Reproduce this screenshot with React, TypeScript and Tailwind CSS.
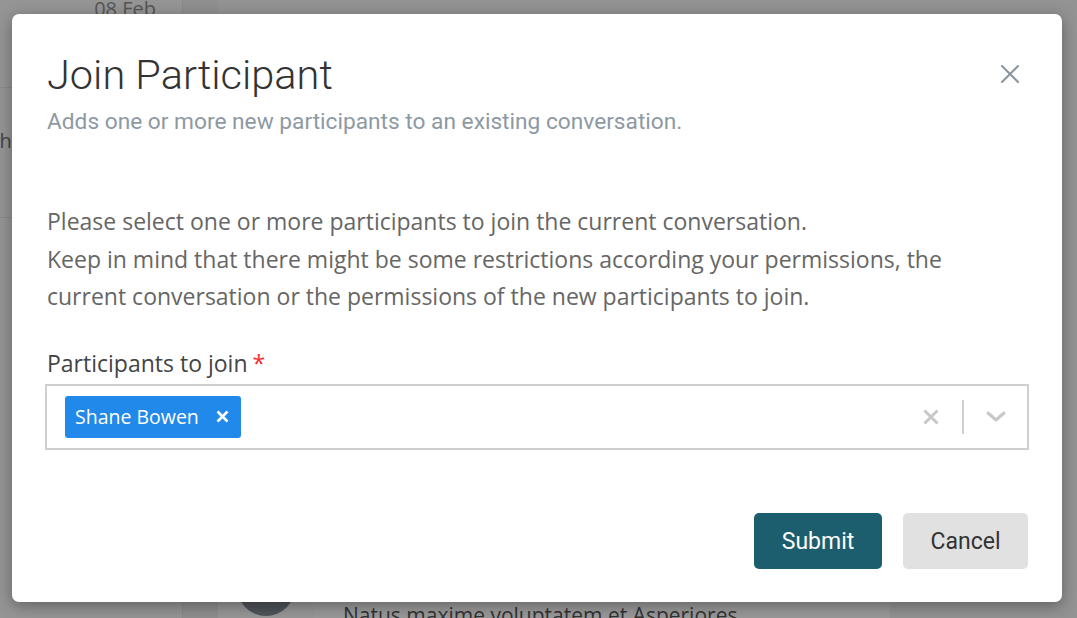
import React from "react";

export default function App() {
  return (
    <div className="relative w-[1077px] h-[618px] overflow-hidden bg-[#939393] font-['Roboto',sans-serif]">
      {/* background app (dimmed) */}
      <div className="flex h-full">
        <div className="w-[183px] h-full bg-[#959595] border-r border-[#8a8a8a] flex flex-col">
          <div className="h-[88px] border-b border-[#8a8a8a] flex justify-end pr-[26px]">
            <span className="text-[20px] text-[#555] leading-none mt-[-1px] font-['Open_Sans',sans-serif]">08 Feb</span>
          </div>
          <div className="h-[130px] border-b border-[#8a8a8a] flex items-start pt-[38px]">
            <span className="text-[20px] text-[#444] ml-[-10px] font-['Open_Sans',sans-serif]">ch</span>
          </div>
        </div>
        <div className="w-[35px] h-full bg-[#8f8f8f]" />
        <div className="flex-1 h-full bg-[#939393] flex flex-col justify-end">
          <div className="flex items-end h-[40px]">
            <div className="w-[95px] h-full bg-[#979797] flex justify-center">
              <div className="w-[58px] h-[58px] rounded-full bg-[#4f545a] mt-[-20px]" />
            </div>
            <div className="w-[577px] h-full bg-[#999999] pl-[30px] pt-[22px]">
              <span className="text-[21px] text-[#333] font-['Open_Sans',sans-serif]">Natus maxime voluptatem et Asperiores</span>
            </div>
          </div>
        </div>
      </div>

      {/* modal */}
      <div className="absolute left-[12px] top-[14px] w-[1050px] h-[588px] bg-white rounded-[7px] shadow-[0_4px_16px_rgba(0,0,0,0.35)] flex flex-col">
        <div className="flex justify-between pl-[35px] pr-[40px] pt-[33px]">
          <div>
            <h1 className="text-[41.5px] font-light text-[#333] leading-[56px]">Join Participant</h1>
            <p className="text-[22.7px] text-[#8d99a3] mt-[6px] leading-[26px]">Adds one or more new participants to an existing conversation.</p>
          </div>
          <button className="mt-[15px] w-[24px] h-[24px] flex items-center justify-center text-[#8a949c]">
            <svg width="20" height="20" viewBox="0 0 20 20" fill="none" stroke="currentColor" strokeWidth="2" strokeLinecap="round">
              <path d="M2 2 L18 18 M18 2 L2 18" />
            </svg>
          </button>
        </div>

        <div className="px-[35px] pt-[68px] font-['Open_Sans',sans-serif] text-[#666]">
          <p className="text-[23px] leading-[37.5px]">
            Please select one or more participants to join the current conversation.
            <br />
            Keep in mind that there might be some restrictions according your permissions, the
            <br />
            current conversation or the permissions of the new participants to join.
          </p>

          <div className="mt-[32px] text-[23px] text-[#444] leading-[30px] flex">
            <span>Participants to join</span>
            <span className="text-[#ff2a2a] ml-[5px]">*</span>
          </div>

          <div className="mt-[6px] ml-[-2px] w-[984px] h-[66px] border-2 border-[#cfcfcf] flex items-center pl-[18px] pr-[20px]">
            <div className="h-[42px] bg-[#2189ea] rounded-[3px] flex items-center pl-[10px] pr-[12px] text-white">
              <span className="text-[19.5px]">Shane Bowen</span>
              <svg className="ml-[17px]" width="13" height="13" viewBox="0 0 13 13" stroke="currentColor" strokeWidth="2.6">
                <path d="M1.5 1.5 L11.5 11.5 M11.5 1.5 L1.5 11.5" />
              </svg>
            </div>
            <div className="flex-1" />
            <svg width="18" height="18" viewBox="0 0 18 18" stroke="#c8c8c8" strokeWidth="3">
              <path d="M2.5 2.5 L15.5 15.5 M15.5 2.5 L2.5 15.5" />
            </svg>
            <div className="w-[2px] h-[34px] bg-[#d0d0d0] ml-[22px] mr-[21px]" />
            <svg width="22" height="14" viewBox="0 0 22 14" fill="none" stroke="#c8c8c8" strokeWidth="3" strokeLinecap="round" strokeLinejoin="round">
              <path d="M3 3 L11 10 L19 3" />
            </svg>
          </div>
        </div>

        <div className="flex justify-end gap-[21px] pr-[34px] mt-[63px]">
          <button className="w-[128px] h-[56px] rounded-[5px] bg-[#1d5e6e] text-white text-[23px] pt-[3px]">Submit</button>
          <button className="w-[125px] h-[56px] rounded-[5px] bg-[#e1e1e1] text-[#333] text-[23px] pt-[3px]">Cancel</button>
        </div>
      </div>
    </div>
  );
}
